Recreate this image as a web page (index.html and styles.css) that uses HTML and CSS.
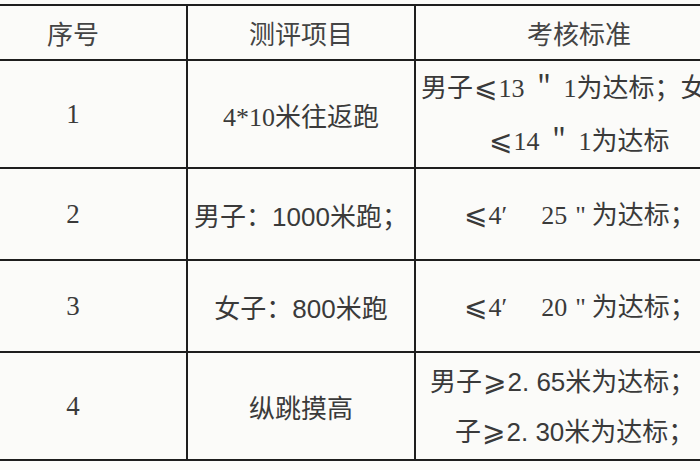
FILE: index.html
```html
<!DOCTYPE html>
<html lang="zh">
<head>
<meta charset="utf-8">
<link rel="stylesheet" href="styles.css">
</head>
<body>
<table class="grid">
  <colgroup>
    <col class="c1"><col class="c2"><col class="c3">
  </colgroup>
  <tr class="head">
    <td>序号</td>
    <td>测评项目</td>
    <td>考核标准</td>
  </tr>
  <tr class="r-tall r1">
    <td class="num">1</td>
    <td><span class="serif">4*10</span>米往返跑</td>
    <td class="std">
      <div class="ln l1a">男子<span class="cmp">⩽</span><span class="serif">13 ＂ 1</span>为达标；女子</div>
      <div class="ln l1b"><span class="cmp">⩽</span><span class="serif">14 ＂ 1</span>为达标</div>
    </td>
  </tr>
  <tr class="r-mid">
    <td class="num">2</td>
    <td class="item2">男子：<span class="sans">1000</span>米跑；</td>
    <td class="std"><div class="ln l2"><span class="cmp">⩽</span><span class="serif">4′<span class="gap">25</span><span class="qt">"</span></span>为达标；</div></td>
  </tr>
  <tr class="r-mid">
    <td class="num">3</td>
    <td class="item3">女子：<span class="sans">800</span>米跑</td>
    <td class="std"><div class="ln l2"><span class="cmp">⩽</span><span class="serif">4′<span class="gap">20</span><span class="qt">"</span></span>为达标；</div></td>
  </tr>
  <tr class="r-tall r4">
    <td class="num">4</td>
    <td>纵跳摸高</td>
    <td class="std">
      <div class="ln l4a">男子<span class="cmp">⩾</span><span class="sans">2. 65</span>米为达标；</div>
      <div class="ln l4b">子<span class="cmp">⩾</span><span class="sans">2. 30</span>米为达标；</div>
    </td>
  </tr>
</table>
</body>
</html>
```

FILE: styles.css
```css
html, body {
  margin: 0;
  padding: 0;
  background: #fbfbf9;
}
body {
  width: 700px;
  height: 470px;
  overflow: hidden;
  font-family: "Noto Sans CJK SC", "DejaVu Sans", sans-serif;
  color: #3a3a3a;
  font-size: 26px;
}
.grid {
  border-collapse: collapse;
  table-layout: fixed;
  width: 784px;
  margin: 4px 0 0 -42px;
}
.c1 { width: 228px; }
.c2 { width: 228px; }
.c3 { width: 328px; }
.grid td {
  border: 2px solid #1e1e1e;
  padding: 0;
  text-align: center;
  vertical-align: middle;
  white-space: nowrap;
  overflow: hidden;
}
.head { height: 55px; }
.head td { color: #444; }
.r-tall { height: 108px; }
.r-mid { height: 92px; }
.serif, .num {
  font-family: "Liberation Serif", "Noto Sans CJK SC", serif;
}
.sans {
  font-family: "Liberation Sans", "DejaVu Sans", sans-serif;
}
.cmp {
  font-family: "DejaVu Sans", sans-serif;
  font-size: 28px;
  line-height: 0;
  margin: 0 1px;
}
.gap { margin-left: 34px; }
.qt { margin: 0 6px 0 8px; }
.num { font-size: 27px; }
.grid td.std { text-align: left; }
.ln { line-height: 50px; }
.r1 .ln { line-height: 50px; }
.r4 .ln { line-height: 48px; }
.l1a { padding-left: 5px; }
.l1b { padding-left: 72px; }
.l2 { padding-left: 47px; }
.l4a { padding-left: 14px; }
.l4b { padding-left: 39px; }
```
